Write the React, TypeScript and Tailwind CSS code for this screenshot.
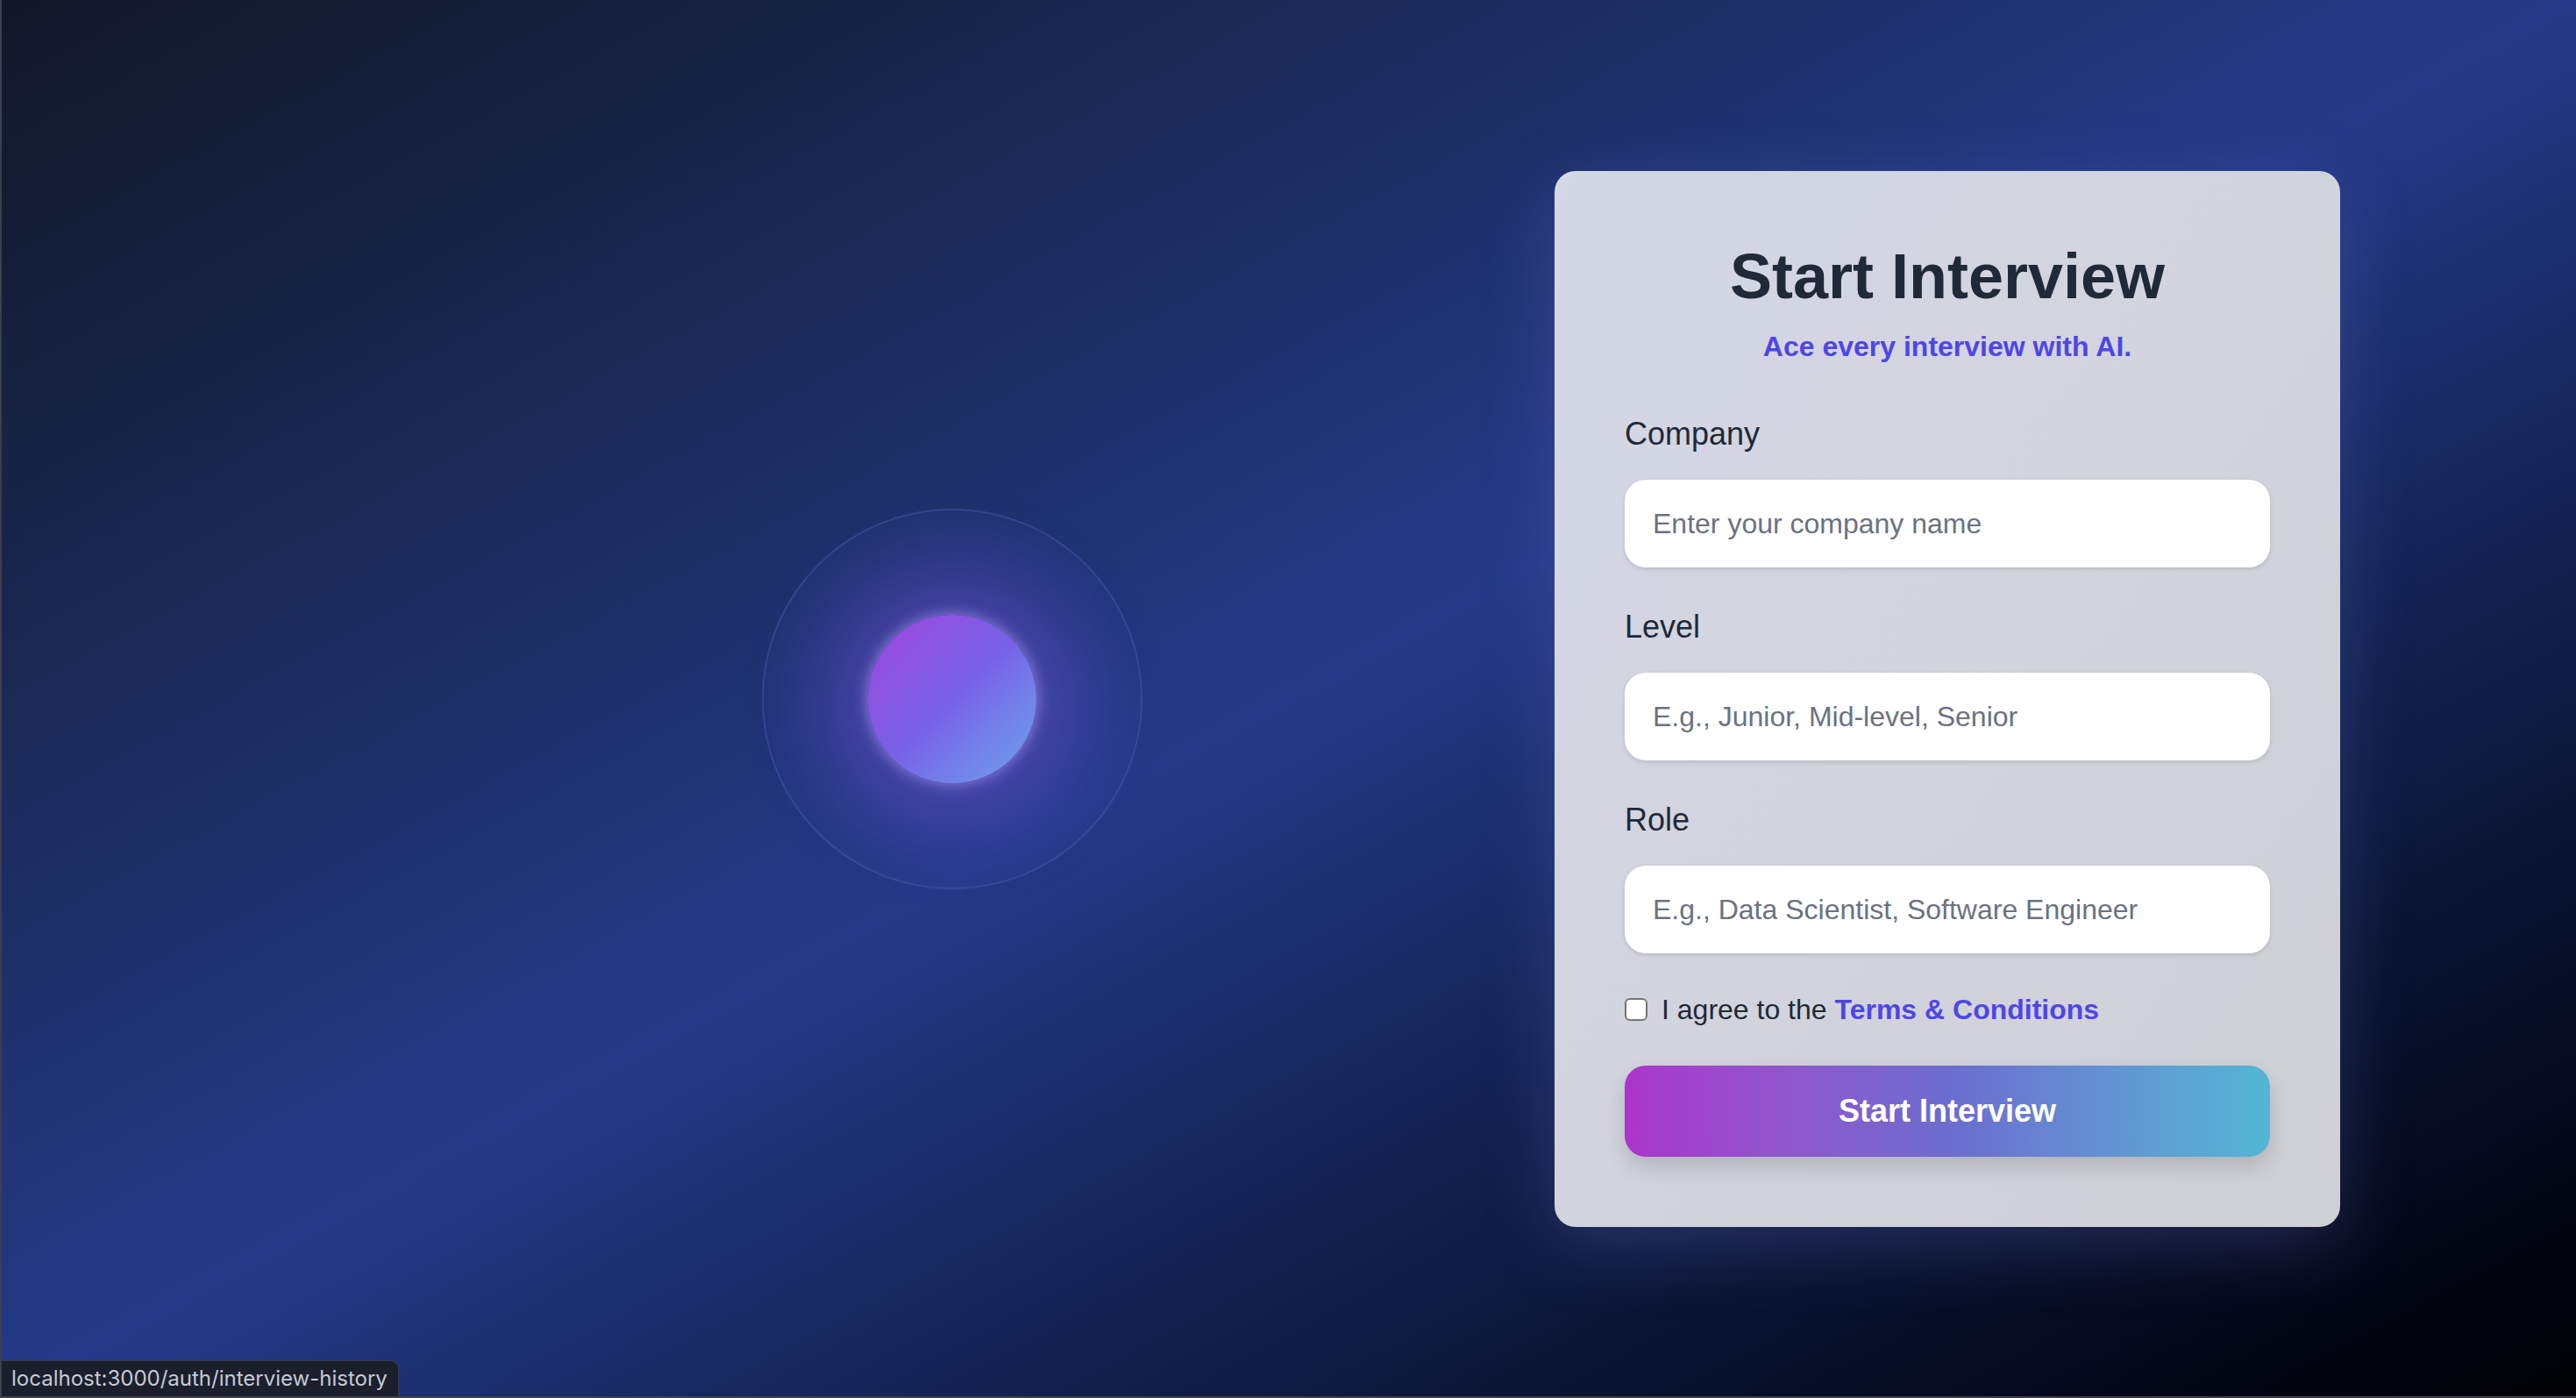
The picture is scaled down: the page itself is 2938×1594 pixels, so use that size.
import { useState } from 'react';

interface Field {
  id: string;
  label: string;
  placeholder: string;
}

const fields: Field[] = [
  { id: 'company', label: 'Company', placeholder: 'Enter your company name' },
  { id: 'level', label: 'Level', placeholder: 'E.g., Junior, Mid-level, Senior' },
  { id: 'role', label: 'Role', placeholder: 'E.g., Data Scientist, Software Engineer' },
];

function Orb() {
  return (
    <div className="w-[434px] h-[434px] shrink-0 rounded-full border-2 border-[#4658a8]/50 bg-[radial-gradient(circle,rgba(120,90,220,0.35)_0%,rgba(90,80,200,0.2)_45%,rgba(60,70,170,0.06)_75%,transparent_100%)] flex items-center justify-center">
      <div className="w-[192px] h-[192px] rounded-full bg-linear-to-br from-[#9e43db] via-[#7761e8] to-[#6aa4e9] shadow-[0_0_14px_3px_rgba(180,160,255,0.5),0_0_100px_36px_rgba(120,90,225,0.35)]" />
    </div>
  );
}

export default function App() {
  const [values, setValues] = useState<Record<string, string>>({ company: '', level: '', role: '' });
  const [agreed, setAgreed] = useState(false);

  return (
    <div className="relative min-h-screen w-full overflow-hidden flex items-center border-l-2 border-b-2 border-[#3b3f4e] bg-linear-to-br from-[#111726] via-[#243a88] to-[#010205] font-['Liberation_Sans',Arial,sans-serif]">
      <div className="flex items-center gap-[470px] pl-[867px] pt-[2px]">
        <Orb />

        <div className="w-[896px] shrink-0 rounded-3xl p-20 bg-linear-to-br from-[#d4d7e6] to-[#cfd0d5] shadow-[0_20px_80px_rgba(110,120,210,0.28)]">
          <h1 className="text-center text-[72px] leading-[80px] font-bold text-[#1f2937]">Start Interview</h1>
          <p className="mt-4 text-center text-[32px] leading-[48px] font-bold text-[#4f46e5]">Ace every interview with AI.</p>

          <form className="mt-12 flex flex-col gap-10" onSubmit={(e) => e.preventDefault()}>
            {fields.map((field) => (
              <div key={field.id}>
                <label htmlFor={field.id} className="block mb-6 text-[36px] leading-[56px] text-[#1f2937]">
                  {field.label}
                </label>
                <input
                  id={field.id}
                  type="text"
                  value={values[field.id]}
                  onChange={(e) => setValues({ ...values, [field.id]: e.target.value })}
                  placeholder={field.placeholder}
                  className="w-full h-[100px] px-8 rounded-3xl bg-white text-[32px] text-[#1f2937] placeholder:text-[#6b7280] outline-none shadow-[0_2px_5px_rgba(0,0,0,0.12)]"
                />
              </div>
            ))}

            <div className="flex items-center h-[48px]">
              <input
                type="checkbox"
                checked={agreed}
                onChange={(e) => setAgreed(e.target.checked)}
                className="appearance-none w-[26px] h-[26px] rounded-[6px] border-2 border-[#767676] bg-white checked:bg-[#4f46e5]"
              />
              <span className="ml-4 text-[32px] leading-[48px] text-[#1f2937]">
                I agree to the <a href="#" className="font-bold text-[#4f46e5]">Terms &amp; Conditions</a>
              </span>
            </div>

            <button
              type="submit"
              className="w-full h-[104px] rounded-3xl text-white text-[36px] font-bold bg-linear-to-r from-[#ab34cb] via-[#6b6ccf] to-[#52b7d3] shadow-[0_12px_24px_rgba(0,0,0,0.14)]"
            >
              Start Interview
            </button>
          </form>
        </div>
      </div>

      <div className="absolute bottom-0 left-0 h-[41px] w-[453px] rounded-tr-[10px] border-t border-r border-[#353a4a] bg-[#1b1f2c] px-[11px] font-['Inter',sans-serif] text-[24px] leading-[40px] text-[#c6cad5]">
        localhost:3000/auth/interview-history
      </div>
    </div>
  );
}
